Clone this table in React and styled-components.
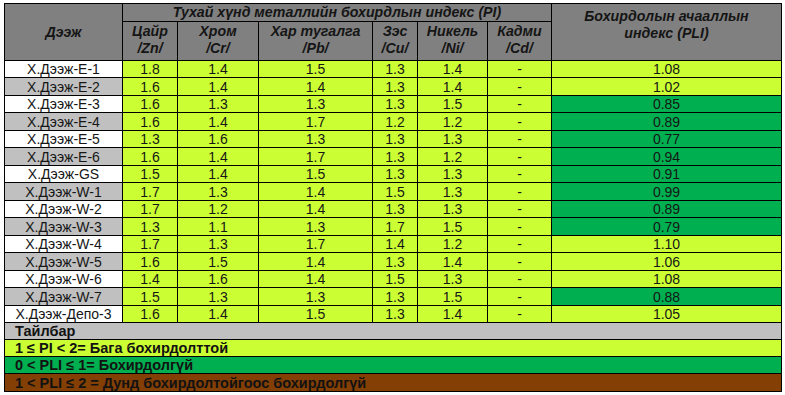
import React from "react";
import styled, { createGlobalStyle } from "styled-components";

const Global = createGlobalStyle`
  html, body { margin: 0; padding: 0; background: #ffffff; }
  body { font-family: "Liberation Sans", Arial, sans-serif; }
`;

const COLORS = {
  header: "#808080",
  lime: "#ccff33",
  green: "#00b050",
  brown: "#843f04",
  grey: "#c0c0c0",
  white: "#ffffff",
};

const Page = styled.div`
  padding: 3px 0 0 4px;
`;

const Sheet = styled.div`
  display: grid;
  width: max-content;
  grid-template-columns: 117px 54px 80px 113px 44px 69px 63px 229px;
  grid-template-rows: ${(p) => p.$rows};
  gap: 1px;
  padding: 1px;
  background: #000;
`;

const HeadCell = styled.div`
  background: ${COLORS.header};
  color: #151515;
  font-weight: bold;
  font-style: italic;
  font-size: 14.2px;
  line-height: 17px;
  text-align: center;
  display: flex;
  justify-content: center;
  align-items: ${(p) => (p.$top ? "flex-start" : "center")};
  padding: ${(p) => (p.$top ? "4px 0 0" : p.$sub ? "0 0 3px" : "0")};
  grid-column: ${(p) => p.$col || "auto"};
  grid-row: ${(p) => p.$row || "auto"};
`;

const Cell = styled.div`
  background: ${(p) => p.$bg};
  color: #161616;
  font-size: 14px;
  line-height: 16px;
  display: flex;
  align-items: center;
  justify-content: center;
  white-space: nowrap;
  overflow: hidden;
`;

const LegendCell = styled.div`
  grid-column: 1 / -1;
  background: ${(p) => p.$bg};
  color: #121212;
  font-weight: bold;
  font-size: 14.5px;
  line-height: 16px;
  display: flex;
  align-items: center;
  padding-left: 10px;
  white-space: nowrap;
`;

const data = [
  ["Х.Дээж-Е-1", "1.8", "1.4", "1.5", "1.3", "1.4", "-", "1.08"],
  ["Х.Дээж-Е-2", "1.6", "1.4", "1.4", "1.3", "1.4", "-", "1.02"],
  ["Х.Дээж-Е-3", "1.6", "1.3", "1.3", "1.3", "1.5", "-", "0.85"],
  ["Х.Дээж-Е-4", "1.6", "1.4", "1.7", "1.2", "1.2", "-", "0.89"],
  ["Х.Дээж-Е-5", "1.3", "1.6", "1.3", "1.3", "1.3", "-", "0.77"],
  ["Х.Дээж-Е-6", "1.6", "1.4", "1.7", "1.3", "1.2", "-", "0.94"],
  ["Х.Дээж-GS", "1.5", "1.4", "1.5", "1.3", "1.3", "-", "0.91"],
  ["Х.Дээж-W-1", "1.7", "1.3", "1.4", "1.5", "1.3", "-", "0.99"],
  ["Х.Дээж-W-2", "1.7", "1.2", "1.4", "1.3", "1.3", "-", "0.89"],
  ["Х.Дээж-W-3", "1.3", "1.1", "1.3", "1.7", "1.5", "-", "0.79"],
  ["Х.Дээж-W-4", "1.7", "1.3", "1.7", "1.4", "1.2", "-", "1.10"],
  ["Х.Дээж-W-5", "1.6", "1.5", "1.4", "1.3", "1.4", "-", "1.06"],
  ["Х.Дээж-W-6", "1.4", "1.6", "1.4", "1.5", "1.3", "-", "1.08"],
  ["Х.Дээж-W-7", "1.5", "1.3", "1.3", "1.3", "1.5", "-", "0.88"],
  ["Х.Дээж-Депо-3", "1.6", "1.4", "1.5", "1.3", "1.4", "-", "1.05"],
];

const legend = [
  { text: "Тайлбар", bg: COLORS.grey },
  { text: "1 ≤ PI < 2= Бага бохирдолттой", bg: COLORS.lime },
  { text: "0 < PLI ≤ 1= Бохирдолгүй", bg: COLORS.green },
  { text: "1 < PLI ≤ 2 = Дунд бохирдолтойгоос бохирдолгүй", bg: COLORS.brown },
];

const rowHeights = [
  17,
  38,
  ...data.map((_, i) => (i % 2 === 0 ? 16 : 17)),
  16,
  16,
  16,
  17,
];

const subHeads = [
  ["Цайр", "/Zn/"],
  ["Хром", "/Cr/"],
  ["Хар тугалга", "/Pb/"],
  ["Зэс", "/Cu/"],
  ["Никель", "/Ni/"],
  ["Кадми", "/Cd/"],
];

export default function App() {
  return (
    <>
      <Global />
      <Page>
        <Sheet $rows={rowHeights.map((h) => `${h}px`).join(" ")}>
          <HeadCell $col="1" $row="1 / 3">
            Дээж
          </HeadCell>
          <HeadCell $col="2 / 8" $row="1">
            Тухай хүнд металлийн бохирдлын индекс (PI)
          </HeadCell>
          <HeadCell $col="8" $row="1 / 3" $top>
            Бохирдолын ачааллын
            <br />
            индекс (PLI)
          </HeadCell>
          {subHeads.map(([a, b], i) => (
            <HeadCell key={a} $col={`${i + 2}`} $row="2" $sub>
              <span>
                {a}
                <br />
                {b}
              </span>
            </HeadCell>
          ))}
          {data.map((row, r) =>
            row.map((v, c) => {
              let bg = COLORS.lime;
              if (c === 0) bg = r % 2 === 0 ? COLORS.white : COLORS.grey;
              if (c === 7) bg = parseFloat(v) <= 1 ? COLORS.green : COLORS.lime;
              return (
                <Cell key={`${r}-${c}`} $bg={bg}>
                  {v}
                </Cell>
              );
            })
          )}
          {legend.map((l) => (
            <LegendCell key={l.text} $bg={l.bg}>
              {l.text}
            </LegendCell>
          ))}
        </Sheet>
      </Page>
    </>
  );
}
